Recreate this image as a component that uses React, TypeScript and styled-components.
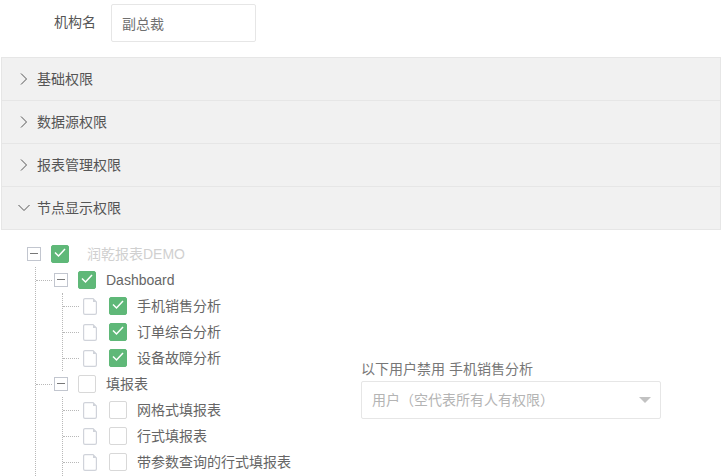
import React from "react";
import styled, { createGlobalStyle } from "styled-components";

const GlobalStyle = createGlobalStyle`
    html, body {
        margin: 0;
        height: 476px;
        overflow: hidden;
        background: #ffffff;
    }
    * {
        box-sizing: border-box;
    }
    body {
        font-family: "Liberation Sans", "Noto Sans CJK SC", sans-serif;
        font-size: 14px;
        line-height: 20px;
        color: #606266;
    }
`;

const Page = styled.div`
    width: 723px;
`;

const NameRow = styled.div`
    display: flex;
    align-items: center;
    height: 57px;
    padding: 4px 0 15px;
`;

const NameLabel = styled.label`
    width: 96px;
    text-align: right;
    margin-right: 15px;
    padding-bottom: 2px;
    color: #555555;
`;

const NameInput = styled.div`
    width: 145px;
    height: 38px;
    padding: 2px 0 0 10px;
    display: flex;
    align-items: center;
    border: 1px solid #e6e6e6;
    border-radius: 2px;
    color: #707070;
`;

const Collapse = styled.div`
    margin-left: 1px;
    width: 720px;
    border-top: 1px solid #e6e6e6;
`;

const PanelHeader = styled.div`
    display: flex;
    align-items: center;
    height: 43px;
    padding-left: 16px;
    gap: 7px;
    background: #f1f1f1;
    border-bottom: 1px solid #e6e6e6;
    border-left: 1px solid #e6e6e6;
    border-right: 1px solid #e6e6e6;
    color: #555555;
`;

const PanelBody = styled.div`
    display: flex;
    padding: 11px 0 0 26px;
`;

const TreeColumn = styled.div`
    width: 334px;
    flex: none;
`;

const TreeList = styled.div<{ $indent: number; $tail?: number }>`
    position: relative;
    padding-left: ${(p) => p.$indent}px;
    padding-bottom: ${(p) => p.$tail ?? 0}px;

    &::before {
        content: "";
        position: absolute;
        left: 8px;
        top: 0;
        bottom: 0;
        border-left: 1px dotted #b8b8b8;
    }
`;

const TreeRow = styled.div`
    position: relative;
    display: flex;
    align-items: center;
    height: 26px;
`;

const Connector = styled.span<{ $gap: number }>`
    position: absolute;
    left: ${(p) => -p.$gap - 16}px;
    top: 13px;
    width: 16px;
    border-top: 1px dotted #b8b8b8;
`;

const Switcher = styled.span`
    position: relative;
    width: 14px;
    height: 14px;
    flex: none;
    margin-right: 10px;
    border: 1px solid #c2c6cf;
    background: #ffffff;

    &::after {
        content: "";
        position: absolute;
        left: 2px;
        right: 2px;
        top: 5px;
        border-top: 1px solid #777777;
    }
`;

const FileIcon = styled.svg`
    width: 14px;
    height: 17px;
    flex: none;
    margin-right: 12px;
`;

const CheckBox = styled.span<{ $checked?: boolean }>`
    display: flex;
    width: 18px;
    height: 18px;
    flex: none;
    border-radius: 2px;
    border: 1px solid ${(p) => (p.$checked ? "#5fb878" : "#d8d8d8")};
    background: ${(p) => (p.$checked ? "#5fb878" : "#ffffff")};
`;

const NodeLabel = styled.span<{ $root?: boolean }>`
    margin-left: ${(p) => (p.$root ? 18 : 10)}px;
    white-space: nowrap;
    color: ${(p) => (p.$root ? "#d0d0d0" : "#666666")};
`;

const UserColumn = styled.div`
    padding-top: 118px;
`;

const UserLabel = styled.div`
    margin-bottom: 2px;
    color: #777777;
`;

const UserSelect = styled.div`
    position: relative;
    display: flex;
    align-items: center;
    width: 300px;
    height: 38px;
    padding-left: 10px;
    border: 1px solid #e6e6e6;
    border-radius: 2px;
    color: #b4b4b4;

    &::after {
        content: "";
        position: absolute;
        right: 9px;
        top: 15px;
        border: 6px solid transparent;
        border-top-color: #c2c2c2;
        border-bottom: none;
    }
`;

const Chevron = ({ open }: { open?: boolean }) => (
    <svg width="12" height="12" viewBox="0 0 12 12" fill="none" stroke="#555" strokeWidth="1">
        {open ? <polyline points="0.5,3 6,8.5 11.5,3" /> : <polyline points="3,0.5 8.5,6 3,11.5" />}
    </svg>
);

const Tick = () => (
    <svg width="16" height="16" viewBox="0 0 16 16" fill="none" stroke="#fff" strokeWidth="1.5">
        <polyline points="3,6.5 6.5,10 13,3" />
    </svg>
);

const File = () => (
    <FileIcon viewBox="0 0 14 17" fill="#ffffff" stroke="#d0d3da" strokeWidth="1.2">
        <path d="M2 0.6 H10 L13.4 4 V15 A1.4 1.4 0 0 1 12 16.4 H2 A1.4 1.4 0 0 1 0.6 15 V2 A1.4 1.4 0 0 1 2 0.6 Z" />
        <path d="M10 0.6 L13.4 4 H10 Z" fill="#d0d3da" stroke="none" />
    </FileIcon>
);

const panels = ["基础权限", "数据源权限", "报表管理权限"];

const Leaf = ({ name, checked }: { name: string; checked?: boolean }) => (
    <TreeRow>
        <Connector $gap={4} />
        <File />
        <CheckBox $checked={checked}>{checked && <Tick />}</CheckBox>
        <NodeLabel>{name}</NodeLabel>
    </TreeRow>
);

const Folder = ({ name, checked }: { name: string; checked?: boolean }) => (
    <TreeRow>
        <Connector $gap={2} />
        <Switcher />
        <CheckBox $checked={checked}>{checked && <Tick />}</CheckBox>
        <NodeLabel>{name}</NodeLabel>
    </TreeRow>
);

export default function App() {
    return (
        <Page>
            <GlobalStyle />
            <NameRow>
                <NameLabel>机构名</NameLabel>
                <NameInput>副总裁</NameInput>
            </NameRow>
            <Collapse>
                {panels.map((name) => (
                    <PanelHeader key={name}>
                        <Chevron />
                        {name}
                    </PanelHeader>
                ))}
                <PanelHeader>
                    <Chevron open />
                    节点显示权限
                </PanelHeader>
                <PanelBody>
                    <TreeColumn>
                        <TreeRow>
                            <Switcher />
                            <CheckBox $checked>
                                <Tick />
                            </CheckBox>
                            <NodeLabel $root>润乾报表DEMO</NodeLabel>
                        </TreeRow>
                        <TreeList $indent={27}>
                            <Folder name="Dashboard" checked />
                            <TreeList $indent={29}>
                                <Leaf name="手机销售分析" checked />
                                <Leaf name="订单综合分析" checked />
                                <Leaf name="设备故障分析" checked />
                            </TreeList>
                            <Folder name="填报表" />
                            <TreeList $indent={29} $tail={1}>
                                <Leaf name="网格式填报表" />
                                <Leaf name="行式填报表" />
                                <Leaf name="带参数查询的行式填报表" />
                            </TreeList>
                        </TreeList>
                    </TreeColumn>
                    <UserColumn>
                        <UserLabel>以下用户禁用 手机销售分析</UserLabel>
                        <UserSelect>用户（空代表所有人有权限）</UserSelect>
                    </UserColumn>
                </PanelBody>
            </Collapse>
        </Page>
    );
}
